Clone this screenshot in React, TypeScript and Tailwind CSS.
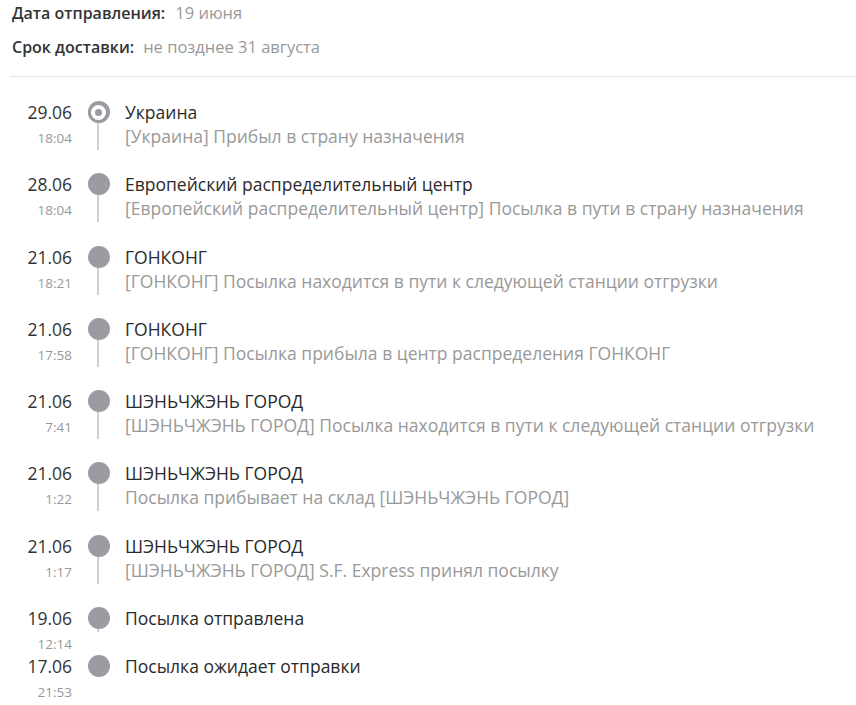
import React from "react";

type Item = { date: string; time: string; title: string; desc?: string; current?: boolean };

const items: Item[] = [
  { date: "29.06", time: "18:04", title: "Украина", desc: "[Украина] Прибыл в страну назначения", current: true },
  { date: "28.06", time: "18:04", title: "Европейский распределительный центр", desc: "[Европейский распределительный центр] Посылка в пути в страну назначения" },
  { date: "21.06", time: "18:21", title: "ГОНКОНГ", desc: "[ГОНКОНГ] Посылка находится в пути к следующей станции отгрузки" },
  { date: "21.06", time: "17:58", title: "ГОНКОНГ", desc: "[ГОНКОНГ] Посылка прибыла в центр распределения ГОНКОНГ" },
  { date: "21.06", time: "7:41", title: "ШЭНЬЧЖЭНЬ ГОРОД", desc: "[ШЭНЬЧЖЭНЬ ГОРОД] Посылка находится в пути к следующей станции отгрузки" },
  { date: "21.06", time: "1:22", title: "ШЭНЬЧЖЭНЬ ГОРОД", desc: "Посылка прибывает на склад [ШЭНЬЧЖЭНЬ ГОРОД]" },
  { date: "21.06", time: "1:17", title: "ШЭНЬЧЖЭНЬ ГОРОД", desc: "[ШЭНЬЧЖЭНЬ ГОРОД] S.F. Express принял посылку" },
  { date: "19.06", time: "12:14", title: "Посылка отправлена" },
  { date: "17.06", time: "21:53", title: "Посылка ожидает отправки" },
];

export default function App() {
  return (
    <div className="w-[856px] h-[705px] bg-white overflow-hidden" style={{ fontFamily: '"Open Sans", "Noto Sans", sans-serif' }}>
      <div className="pl-[12px] pt-[1px] flex flex-col gap-[10px]">
        <div className="flex items-center h-[24px]">
          <span className="text-[16px] font-semibold text-[#333]">Дата отправления:</span>
          <span className="ml-[10px] text-[16.5px] text-[#999]">19 июня</span>
        </div>
        <div className="flex items-center h-[24px]">
          <span className="text-[16px] font-semibold text-[#333]">Срок доставки:</span>
          <span className="ml-[9px] text-[16.5px] text-[#999]">не позднее 31 августа</span>
        </div>
      </div>
      <div className="ml-[10px] mt-[17px] border-t border-[#e5e5e5]" />
      <div className="pt-[23px] flex flex-col">
        {items.map((it, i) => {
          const last = i === items.length - 1;
          return (
            <div key={i} className={`flex ${it.desc ? "pb-[24.3px]" : "pb-[24px]"}`}>
              <div className="w-[72px] h-[24px] shrink-0 text-right">
                <div className="text-[17.5px] leading-[24px] text-[#333]">{it.date}</div>
                <div className="mt-[2px] text-[13.5px] leading-[24px] text-[#999]">{it.time}</div>
              </div>
              <div className="w-[53px] shrink-0 relative flex justify-center">
                <div className="mt-[1px] w-[22px] h-[22px] rounded-full bg-[#9c9ba4] flex items-center justify-center relative z-10">
                  {it.current && (
                    <div className="w-[21px] h-[21px] rounded-full bg-white border-[3px] border-[#9c9ba4] flex items-center justify-center">
                      <div className="w-[7px] h-[7px] rounded-full bg-[#9c9ba4]" />
                    </div>
                  )}
                </div>
                {!last && (
                  <div className="absolute left-[25px] top-[20px] bottom-[-2px] w-[2px] bg-[#cfcfcf]" />
                )}
              </div>
              <div className="flex flex-col">
                <div className="text-[17.5px] leading-[24px] text-[#2a2a2a]">{it.title}</div>
                {it.desc && <div className="text-[17.5px] leading-[24px] text-[#999]">{it.desc}</div>}
              </div>
            </div>
          );
        })}
      </div>
    </div>
  );
}
